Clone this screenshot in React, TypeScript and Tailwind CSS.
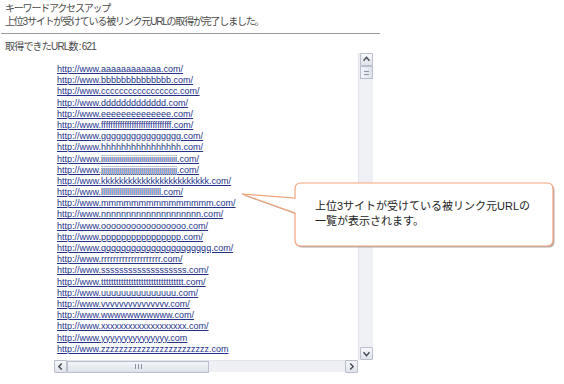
import React from 'react';

const urls: string[] = [
  'http://www.' + 'a'.repeat(12) + '.com/',
  'http://www.' + 'b'.repeat(14) + '.com/',
  'http://www.' + 'c'.repeat(17) + '.com/',
  'http://www.' + 'd'.repeat(13) + '.com/',
  'http://www.' + 'e'.repeat(14) + '.com/',
  'http://www.' + 'f'.repeat(30) + '.com/',
  'http://www.' + 'g'.repeat(16) + '.com/',
  'http://www.' + 'h'.repeat(16) + '.com/',
  'http://www.' + 'i'.repeat(38) + '.com/',
  'http://www.' + 'j'.repeat(38) + '.com/',
  'http://www.' + 'k'.repeat(24) + '.com/',
  'http://www.' + 'l'.repeat(30) + '.com/',
  'http://www.' + 'm'.repeat(15) + '.com/',
  'http://www.' + 'n'.repeat(20) + '.com/',
  'http://www.' + 'o'.repeat(17) + '.com/',
  'http://www.' + 'p'.repeat(16) + '.com/',
  'http://www.' + 'q'.repeat(22) + '.com/',
  'http://www.' + 'r'.repeat(20) + '.com/',
  'http://www.' + 's'.repeat(19) + '.com/',
  'http://www.' + 't'.repeat(33) + '.com/',
  'http://www.' + 'u'.repeat(15) + '.com/',
  'http://www.' + 'v'.repeat(15) + '.com/',
  'http://www.' + 'w'.repeat(11) + '.com/',
  'http://www.' + 'x'.repeat(19) + '.com/',
  'http://www.' + 'y'.repeat(15) + '.com',
  'http://www.' + 'z'.repeat(24) + '.com',
];

const jp = { fontFamily: '"Liberation Sans", "Noto Sans CJK JP", sans-serif' };

const ArrowBtn = ({ dir }: { dir: 'up' | 'down' | 'left' | 'right' }) => {
  const d = {
    up: 'M3 8 L6.5 4 L10 8',
    down: 'M3 5 L6.5 9 L10 5',
    left: 'M8 3 L4.5 6.5 L8 10',
    right: 'M5 3 L8.5 6.5 L5 10',
  }[dir];
  return (
    <div className="w-[13px] h-[13px] border border-[#b9bfcc] bg-gradient-to-b from-[#f7f8fa] to-[#dfe3ea] rounded-[1px] flex items-center justify-center">
      <svg width="13" height="13" viewBox="0 0 13 13">
        <path d={d} fill="none" stroke="#404652" strokeWidth="1.6" />
      </svg>
    </div>
  );
};

export default function App() {
  return (
    <div className="w-[564px] h-[384px] bg-white relative overflow-hidden" style={jp}>
      <div className="pl-[5px] pt-[2px] text-[10px] leading-[13px] tracking-[-1.2px] text-[#4a4a4a]">
        <div>キーワードアクセスアップ</div>
        <div>上位3サイトが受けている被リンク元URLの取得が完了しました。</div>
      </div>
      <div className="mt-[5px] ml-[1px] w-[379px] h-px bg-[#9a9a9a]" />
      <div className="mt-[7px] pl-[5px] text-[10px] leading-[12px] tracking-[-0.8px] text-[#4a4a4a]">
        取得できたURL数<span className="px-[1px]">:</span>621
      </div>

      <div className="ml-[54px] w-[319px] h-[319px] flex flex-col">
        <div className="flex flex-1 min-h-0">
          <div className="flex-1 overflow-hidden pl-[3px] pt-[8px]">
            {urls.map((u) => (
              <div key={u} className="h-[11.2px] leading-[11.2px] whitespace-nowrap">
                <a
                  href="#"
                  className="text-[9px] text-[#24318a] underline underline-offset-[1px]"
                  style={{ fontFamily: '"Liberation Sans", sans-serif' }}
                >
                  {u}
                </a>
              </div>
            ))}
          </div>
          <div className="w-[15px] bg-[#eef0f4] border-l border-[#e2e5eb] flex flex-col items-center">
            <ArrowBtn dir="up" />
            <div className="w-[13px] h-[13px] border border-[#b9bfcc] bg-gradient-to-r from-[#f3f5f8] to-[#dde2ea] flex flex-col items-center justify-center gap-[2px]">
              <div className="w-[5px] h-px bg-[#8a93a3]" />
              <div className="w-[5px] h-px bg-[#8a93a3]" />
            </div>
            <div className="flex-1" />
            <ArrowBtn dir="down" />
          </div>
        </div>
        <div className="h-[12px] flex">
          <div className="flex-1 bg-[#eef0f4] border-t border-[#e2e5eb] flex items-center">
            <ArrowBtn dir="left" />
            <div className="w-[142px] h-[12px] border border-[#b9bfcc] bg-gradient-to-b from-[#f3f5f8] to-[#dde2ea] flex items-center justify-center gap-[2px]">
              <div className="w-px h-[5px] bg-[#8a93a3]" />
              <div className="w-px h-[5px] bg-[#8a93a3]" />
              <div className="w-px h-[5px] bg-[#8a93a3]" />
            </div>
            <div className="flex-1" />
            <ArrowBtn dir="right" />
          </div>
          <div className="w-[15px] bg-white" />
        </div>
      </div>

      <svg className="absolute inset-0 pointer-events-none" width="564" height="384" viewBox="0 0 564 384">
        <path
          d="M301 183 H547 Q553 183 553 189 V240 Q553 246 547 246 H301 Q295 246 295 240 V213 L242 194 L295 198 V189 Q295 183 301 183 Z"
          fill="#8a8a8a"
          opacity="0.7"
          transform="translate(1.5 1.5)"
        />
        <path
          d="M301 183 H547 Q553 183 553 189 V240 Q553 246 547 246 H301 Q295 246 295 240 V213 L242 194 L295 198 V189 Q295 183 301 183 Z"
          fill="#ffffff"
          stroke="#f3a47c"
          strokeWidth="1.2"
        />
      </svg>
      <div className="absolute left-[315px] top-[199px] text-[11px] leading-[15px] text-[#222]" style={jp}>
        <div>上位3サイトが受けている被リンク元URLの</div>
        <div>一覧が表示されます。</div>
      </div>
    </div>
  );
}
